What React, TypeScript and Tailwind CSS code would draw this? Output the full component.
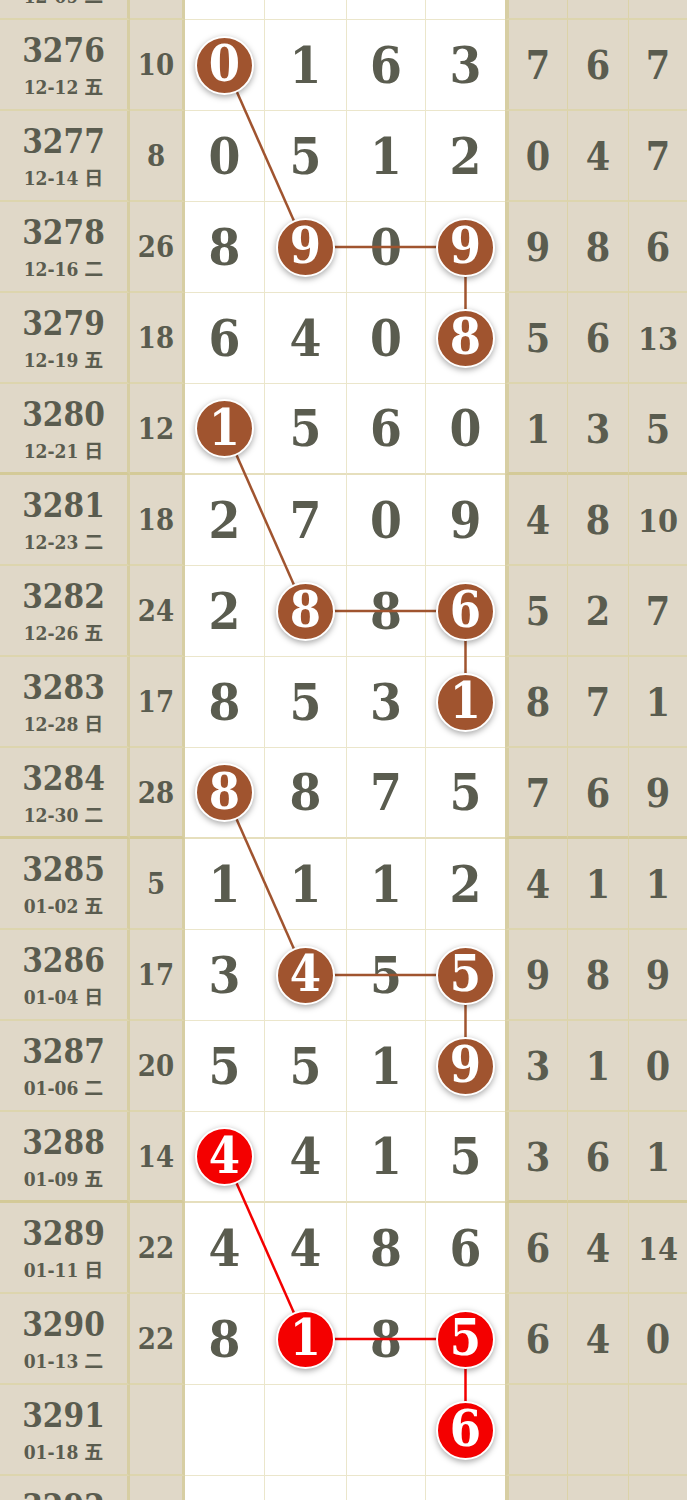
import React from "react";

type Row = { n: string; d: string; s: string; w: string[]; r: string[] };

const rows: Row[] = [
  { n: "3275", d: "12-09 二", s: "", w: ["", "", "", ""], r: ["", "", ""] },
  { n: "3276", d: "12-12 五", s: "10", w: ["0", "1", "6", "3"], r: ["7", "6", "7"] },
  { n: "3277", d: "12-14 日", s: "8", w: ["0", "5", "1", "2"], r: ["0", "4", "7"] },
  { n: "3278", d: "12-16 二", s: "26", w: ["8", "9", "0", "9"], r: ["9", "8", "6"] },
  { n: "3279", d: "12-19 五", s: "18", w: ["6", "4", "0", "8"], r: ["5", "6", "13"] },
  { n: "3280", d: "12-21 日", s: "12", w: ["1", "5", "6", "0"], r: ["1", "3", "5"] },
  { n: "3281", d: "12-23 二", s: "18", w: ["2", "7", "0", "9"], r: ["4", "8", "10"] },
  { n: "3282", d: "12-26 五", s: "24", w: ["2", "8", "8", "6"], r: ["5", "2", "7"] },
  { n: "3283", d: "12-28 日", s: "17", w: ["8", "5", "3", "1"], r: ["8", "7", "1"] },
  { n: "3284", d: "12-30 二", s: "28", w: ["8", "8", "7", "5"], r: ["7", "6", "9"] },
  { n: "3285", d: "01-02 五", s: "5", w: ["1", "1", "1", "2"], r: ["4", "1", "1"] },
  { n: "3286", d: "01-04 日", s: "17", w: ["3", "4", "5", "5"], r: ["9", "8", "9"] },
  { n: "3287", d: "01-06 二", s: "20", w: ["5", "5", "1", "9"], r: ["3", "1", "0"] },
  { n: "3288", d: "01-09 五", s: "14", w: ["4", "4", "1", "5"], r: ["3", "6", "1"] },
  { n: "3289", d: "01-11 日", s: "22", w: ["4", "4", "8", "6"], r: ["6", "4", "14"] },
  { n: "3290", d: "01-13 二", s: "22", w: ["8", "1", "8", "5"], r: ["6", "4", "0"] },
  { n: "3291", d: "01-18 五", s: "", w: ["", "", "", "6"], r: ["", "", ""] },
  { n: "3292", d: "01-20 日", s: "", w: ["", "", "", ""], r: ["", "", ""] },
];

const BROWN = "#a0542f";
const RED = "#f40000";
const groups = [
  { s: 1, c: BROWN },
  { s: 5, c: BROWN },
  { s: 9, c: BROWN },
  { s: 13, c: RED },
];

const circles: Record<string, string> = {};
groups.forEach((g) => {
  circles[`${g.s}-0`] = g.c;
  circles[`${g.s + 2}-1`] = g.c;
  circles[`${g.s + 2}-3`] = g.c;
  circles[`${g.s + 3}-3`] = g.c;
});

const thickAfter = new Set([5, 9, 13]);

const ROW_H = 91;
const colX = [225, 305.5, 386, 465.5];
const cy = (i: number) => i * ROW_H + 45;

const serif = { fontFamily: '"DejaVu Serif Condensed", "DejaVu Serif", serif' };
const cjk = {
  fontFamily: '"DejaVu Serif Condensed", "DejaVu Serif", "Noto Sans CJK SC", serif',
};

const whiteW = ["w-[80px]", "w-[82px]", "w-[79px]", "w-[79px]"];
const rightW = ["w-[62px]", "w-[61px]", "w-[59px]"];

function Circle({ v, c }: { v: string; c: string }) {
  return (
    <div
      className="relative z-20 flex h-[59px] w-[59px] items-center justify-center rounded-full border-2 border-white text-[50px] font-bold leading-none text-white shadow-[0_2px_6px_rgba(0,0,0,0.35)]"
      style={{ backgroundColor: c, ...serif }}
    >
      <span className="-mt-[2px]">{v}</span>
    </div>
  );
}

export default function App() {
  return (
    <div className="h-[1500px] w-[687px] overflow-hidden bg-white text-[#5a5c4f]">
      <div className="relative -mt-[71px]">
        {rows.map((row, i) => {
          const thick = thickAfter.has(i);
          const bb = thick
            ? "border-b-[3px] border-b-[#d4ca98]"
            : "border-b-2 border-b-[#ddd5ae]";
          const wb = thick
            ? "border-b-2 border-b-[#e6dfbd]"
            : "border-b border-b-[#ebe6cb]";
          return (
            <div key={row.n} className="flex h-[91px]">
              <div
                className={`flex w-[130px] shrink-0 flex-col items-center justify-center border-r-[3px] border-r-[#d7cea3] bg-[#e0d8c8] pt-[3px] font-bold ${bb}`}
              >
                <div className="text-[33px] leading-[36px]" style={serif}>
                  {row.n}
                </div>
                <div className="mt-[6px] text-[19px] leading-[24px]" style={cjk}>
                  {row.d}
                </div>
              </div>
              <div
                className={`flex w-[55px] shrink-0 items-center justify-center border-r-[3px] border-r-[#d7cea3] bg-[#e0d8c8] pt-[3px] text-[29px] font-bold ${bb}`}
                style={serif}
              >
                {row.s}
              </div>
              {row.w.map((v, j) => {
                const c = circles[`${i}-${j}`];
                return (
                  <div
                    key={j}
                    className={`flex shrink-0 items-center justify-center bg-white ${whiteW[j]} ${wb} ${
                      j < 3 ? "border-r border-r-[#ebe6cb]" : ""
                    }`}
                  >
                    {c ? (
                      <Circle v={v} c={c} />
                    ) : (
                      <span className="text-[51px] font-bold leading-none" style={serif}>
                        {v}
                      </span>
                    )}
                  </div>
                );
              })}
              {row.r.map((v, j) => (
                <div
                  key={j}
                  className={`flex shrink-0 items-center justify-center bg-[#e0d8c8] pt-[2px] font-bold ${rightW[j]} ${bb} ${
                    j === 0
                      ? "border-l-[4px] border-l-[#d7cea3]"
                      : "border-l border-l-[#dcd3a8]"
                  } ${v.length > 1 ? "text-[32px]" : "text-[39px]"}`}
                  style={serif}
                >
                  {v}
                </div>
              ))}
            </div>
          );
        })}
        <svg
          className="pointer-events-none absolute left-0 top-0 z-10"
          width={687}
          height={rows.length * ROW_H}
        >
          {groups.map((g) => (
            <g key={g.s} stroke={g.c} strokeWidth={2.5} fill="none">
              <line x1={colX[0]} y1={cy(g.s)} x2={colX[1]} y2={cy(g.s + 2)} />
              <line x1={colX[1]} y1={cy(g.s + 2)} x2={colX[3]} y2={cy(g.s + 2)} />
              <line x1={colX[3]} y1={cy(g.s + 2)} x2={colX[3]} y2={cy(g.s + 3)} />
            </g>
          ))}
        </svg>
      </div>
    </div>
  );
}
